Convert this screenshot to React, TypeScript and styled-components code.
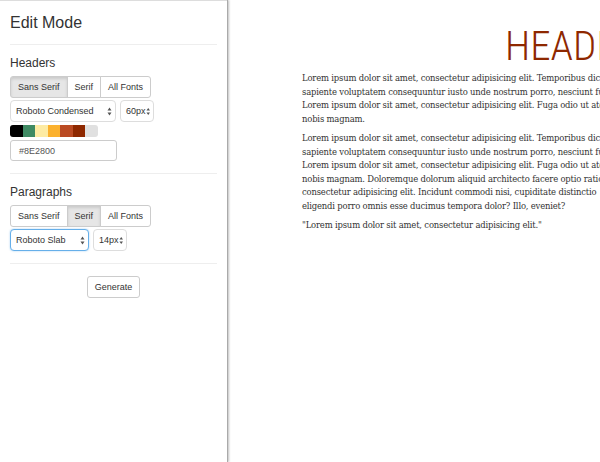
import styled, { createGlobalStyle } from 'styled-components';

const Global = createGlobalStyle`
  body {
    margin: 0;
    background: #fff;
    font-family: "Liberation Sans", Arial, sans-serif;
    color: #333;
  }
`

const Page = styled.div`
  display: flex;
  height: 462px;
  overflow: hidden;
`

const Sidebar = styled.aside`
  flex: 0 0 227px;
  box-sizing: border-box;
  height: 100%;
  padding: 12px 10px 0;
  background: #fff;
  border-top: 1px solid #ddd;
  box-shadow: 1px 0 0 #aaa, 2px 0 2px rgba(0, 0, 0, 0.25);
  position: relative;
  z-index: 1;
`

const Title = styled.h3`
  margin: 0;
  font-size: 16px;
  font-weight: 400;
  line-height: 20px;
`

const Rule = styled.hr`
  margin: 11px 0 11px;
  border: 0;
  border-top: 1px solid #eee;
`

const Section = styled.section`
  display: flex;
  flex-direction: column;
  align-items: flex-start;
  gap: 3px;
  padding-bottom: 1px;
`

const SectionTitle = styled.h4`
  margin: 0 0 3px;
  font-size: 12px;
  font-weight: 400;
  line-height: 14px;
`

const Group = styled.div`
  display: inline-flex;
`

const GroupButton = styled.button<{ $active?: boolean }>`
  height: 22px;
  padding: 0 7px;
  font-family: inherit;
  font-size: 9px;
  color: #333;
  background: ${p => (p.$active ? '#e6e6e6' : '#fff')};
  box-shadow: ${p => (p.$active ? 'inset 0 2px 3px rgba(0,0,0,0.12)' : 'none')};
  border: 1px solid #ccc;
  margin-left: -1px;
  &:first-child {
    margin-left: 0;
    border-radius: 3px 0 0 3px;
  }
  &:last-child {
    border-radius: 0 3px 3px 0;
  }
`

const Selects = styled.div`
  display: flex;
  gap: 4px;
  margin-top: -1px;
`

const SelectBox = styled.div<{ $width: number; $focus?: boolean }>`
  display: flex;
  align-items: center;
  justify-content: space-between;
  box-sizing: border-box;
  width: ${p => p.$width}px;
  height: 22px;
  padding: 0 3px 0 5px;
  font-size: 9px;
  color: #333;
  background: #fff;
  border: 1px solid ${p => (p.$focus ? '#66afe9' : '#ddd')};
  border-radius: 4px;
  box-shadow: ${p => (p.$focus ? '0 0 2px rgba(102,175,233,0.6)' : 'none')};
`

const Swatches = styled.div`
  display: flex;
  border-radius: 3px;
  overflow: hidden;
`

const Swatch = styled.span<{ $color: string }>`
  width: 12.5px;
  height: 12px;
  background: ${p => p.$color};
`

const HexInput = styled.div`
  box-sizing: border-box;
  width: 107px;
  height: 21px;
  padding: 0 8px;
  display: flex;
  align-items: center;
  font-size: 9px;
  color: #555;
  border: 1px solid #ccc;
  border-radius: 3px;
`

const Footer = styled.div`
  display: flex;
  justify-content: center;
  padding-top: 1px;
`

const PrimaryButton = styled.button`
  height: 22px;
  padding: 0 7px;
  font-family: inherit;
  font-size: 9px;
  color: #333;
  background: #fff;
  border: 1px solid #ccc;
  border-radius: 3px;
`

const Main = styled.main`
  flex: 1;
  min-width: 0;
  padding: 25px 0 0 75px;
  overflow: hidden;
`

const Heading = styled.h1`
  margin: 0 0 3px 203px;
  font-family: Roboto, sans-serif;
  font-stretch: 75%;
  font-weight: 300;
  font-size: 41px;
  line-height: 43px;
  color: #8e2800;
  white-space: nowrap;
`

const Para = styled.p`
  margin: 0 0 6px;
  font-family: "DejaVu Serif Condensed", "DejaVu Serif", serif;
  font-size: 9.4px;
  letter-spacing: -0.18px;
  line-height: 13.5px;
  color: #333;
  white-space: nowrap;
`

const Line = styled.span`
  display: block;
`

const Arrows = () => (
  <svg width="5" height="9" viewBox="0 0 5 9">
    <path d="M2.5 0.5 L4.5 3.5 H0.5 Z M2.5 8.5 L0.5 5.5 H4.5 Z" fill="#555" />
  </svg>
)

const colors = ['#000000', '#3f8a63', '#fdeba3', '#fbb12e', '#ba4a22', '#8e2800', '#e0e0e0']

const FontPicker = ({ active, font, fontWidth, size, sizeWidth, focus }: {
  active: number; font: string; fontWidth: number; size: string; sizeWidth: number; focus?: boolean
}) => (
  <>
    <Group>
      {['Sans Serif', 'Serif', 'All Fonts'].map((l, i) => (
        <GroupButton key={l} $active={i === active}>{l}</GroupButton>
      ))}
    </Group>
    <Selects>
      <SelectBox $width={fontWidth} $focus={focus}>{font}<Arrows /></SelectBox>
      <SelectBox $width={sizeWidth}>{size}<Arrows /></SelectBox>
    </Selects>
  </>
)

const para1 = [
  'Lorem ipsum dolor sit amet, consectetur adipisicing elit. Temporibus dicta quisquam',
  'sapiente voluptatem consequuntur iusto unde nostrum porro, nesciunt fugiat.',
  'Lorem ipsum dolor sit amet, consectetur adipisicing elit. Fuga odio ut atque',
  'nobis magnam.',
]
const para2 = [
  'Lorem ipsum dolor sit amet, consectetur adipisicing elit. Temporibus dicta quisquam',
  'sapiente voluptatem consequuntur iusto unde nostrum porro, nesciunt fugiat.',
  'Lorem ipsum dolor sit amet, consectetur adipisicing elit. Fuga odio ut atque',
  'nobis magnam. Doloremque dolorum aliquid architecto facere optio ratione',
  'consectetur adipisicing elit. Incidunt commodi nisi, cupiditate distinctio',
  'eligendi porro omnis esse ducimus tempora dolor? Illo, eveniet?',
]

export default function App() {
  return (
    <Page>
      <Global />
      <Sidebar>
        <Title>Edit Mode</Title>
        <Rule />
        <Section>
          <SectionTitle>Headers</SectionTitle>
          <FontPicker active={0} font="Roboto Condensed" fontWidth={106} size="60px" sizeWidth={34} />
          <Swatches>
            {colors.map(c => <Swatch key={c} $color={c} />)}
          </Swatches>
          <HexInput>#8E2800</HexInput>
        </Section>
        <Rule />
        <Section>
          <SectionTitle>Paragraphs</SectionTitle>
          <FontPicker active={1} font="Roboto Slab" fontWidth={79} size="14px" sizeWidth={34} focus />
        </Section>
        <Rule />
        <Footer>
          <PrimaryButton>Generate</PrimaryButton>
        </Footer>
      </Sidebar>
      <Main>
        <Heading>HEADERS</Heading>
        <Para>{para1.map(l => <Line key={l}>{l}</Line>)}</Para>
        <Para>{para2.map(l => <Line key={l}>{l}</Line>)}</Para>
        <Para>"Lorem ipsum dolor sit amet, consectetur adipisicing elit."</Para>
      </Main>
    </Page>
  )
}
